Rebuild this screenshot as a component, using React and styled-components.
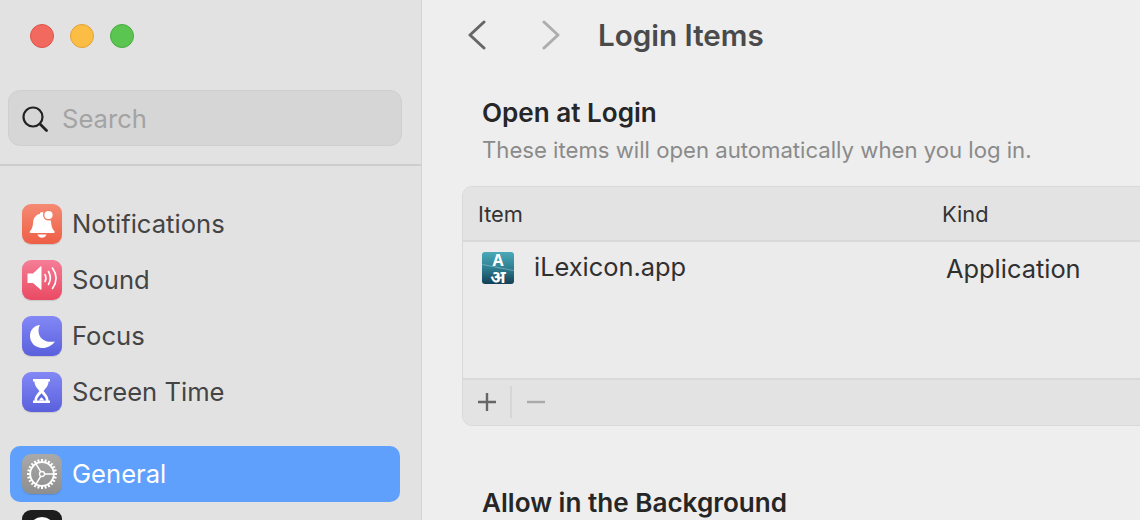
import React from "react";
import styled, { createGlobalStyle } from "styled-components";

const GlobalStyle = createGlobalStyle`
  html, body {
    margin: 0;
    padding: 0;
    height: 100%;
    overflow: hidden;
    font-family: Inter, "Liberation Sans", sans-serif;
    -webkit-font-smoothing: antialiased;
  }
`;

const Window = styled.div`
  display: flex;
  width: 1140px;
  height: 520px;
  overflow: hidden;
  background: #eeeeee;
`;

const Sidebar = styled.aside`
  flex: 0 0 421px;
  height: 520px;
  overflow: hidden;
  box-sizing: content-box;
  background: #e2e2e2;
  border-right: 1px solid #d4d4d4;
`;

const Lights = styled.div`
  display: flex;
  align-items: center;
  gap: 16px;
  height: 72px;
  padding-left: 30px;
`;

const Light = styled.span`
  width: 24px;
  height: 24px;
  box-sizing: border-box;
  border-radius: 50%;
  background: ${(p) => p.$color};
  border: 1px solid ${(p) => p.$edge};
`;

const SearchBox = styled.div`
  display: flex;
  align-items: center;
  gap: 14px;
  box-sizing: border-box;
  height: 56px;
  margin: 18px 19px 0 8px;
  padding: 1px 0 0 13px;
  background: #d6d6d6;
  border: 1px solid #cfcfcf;
  border-radius: 12px;
  color: #a3a3a3;
  font-size: 25.6px;
`;

const Divider = styled.div`
  height: 2px;
  margin-top: 18px;
  background: #cdcdcd;
`;

const Nav = styled.nav`
  padding-top: 30px;
`;

const Group = styled.div`
  margin: 0 21px 26px 10px;
`;

const Row = styled.div`
  display: flex;
  align-items: center;
  gap: 10px;
  height: 56px;
  padding-left: 12px;
  border-radius: 10px;
  font-size: 25.6px;
  color: ${(p) => (p.$active ? "#ffffff" : "#444444")};
  background: ${(p) => (p.$active ? "#5ea0fc" : "transparent")};
`;

const RowLabel = styled.span`
  margin-bottom: 2px;
`;

const IconTile = styled.span`
  flex: 0 0 40px;
  display: flex;
  width: 40px;
  height: 40px;
  border-radius: 9px;
  background: ${(p) => p.$bg};
  box-shadow: 0 1px 1px rgba(0, 0, 0, 0.12);
`;

const Main = styled.main`
  flex: 1;
  min-width: 0;
  height: 520px;
  overflow: hidden;
`;

const TitleBar = styled.header`
  display: flex;
  align-items: center;
  height: 70px;
  padding-left: 45px;
`;

const NavButton = styled.span`
  display: flex;
  width: 24px;
  margin-right: ${(p) => p.$gap}px;
`;

const Title = styled.h1`
  margin: 0;
  font-size: 29.6px;
  font-weight: 600;
  color: #4a4a4a;
`;

const Section = styled.section`
  padding: 27px 0 0 40px;
`;

const Heading = styled.h2`
  margin: 0 0 0 20px;
  font-size: 26.1px;
  line-height: 32px;
  font-weight: 600;
  color: #262626;
`;

const Subtitle = styled.p`
  margin: 7px 0 0 20px;
  font-size: 22.15px;
  line-height: 28px;
  color: #8a8a8a;
`;

const Table = styled.div`
  width: 760px;
  margin-top: 22px;
  box-sizing: border-box;
  border: 1px solid #d9d9d9;
  border-radius: 10px;
  background: #ebebeb;
  overflow: hidden;
`;

const TableHead = styled.div`
  display: grid;
  grid-template-columns: 464px 1fr;
  align-items: center;
  height: 53px;
  padding-left: 15px;
  background: #e3e3e3;
  border-bottom: 2px solid #d9d9d9;
  font-size: 21.8px;
  color: #333333;
`;

const TableBody = styled.div`
  display: grid;
  grid-template-columns: 464px 1fr;
  height: 136px;
  padding-left: 19px;
  font-size: 25.4px;
  color: #303030;
`;

const AppCell = styled.div`
  display: flex;
  align-items: flex-start;
  gap: 20px;
  padding-top: 9px;
  line-height: 32px;
`;

const KindCell = styled.div`
  padding-top: 11px;
  line-height: 32px;
`;

const AppIcon = styled.span`
  position: relative;
  flex: 0 0 32px;
  display: flex;
  flex-direction: column;
  align-items: center;
  width: 32px;
  height: 32px;
  margin-top: 1px;
  border-radius: 3px;
  background: linear-gradient(#4aa9b8 0%, #2f7f92 50%, #123f56 100%);
  color: #ffffff;
  font-weight: 700;

  &::after {
    content: "";
    position: absolute;
    left: 0;
    right: 0;
    top: 15px;
    height: 1px;
    background: rgba(255, 255, 255, 0.3);
    transform: rotate(11deg);
  }
`;

const AppGlyph = styled.span`
  font-size: ${(p) => p.$size}px;
  line-height: 16px;
  font-family: "Noto Sans", "Noto Sans CJK SC", "DejaVu Sans", sans-serif;
`;

const TableFoot = styled.div`
  display: flex;
  align-items: center;
  height: 47px;
  padding-bottom: 2px;
  box-sizing: border-box;
  background: #e3e3e3;
  border-top: 2px solid #d9d9d9;
`;

const FootButton = styled.span`
  display: flex;
  justify-content: center;
  width: 47px;
`;

const FootSeparator = styled.span`
  width: 2px;
  height: 32px;
  background: #d6d6d6;
`;

const SecondHeading = styled(Heading)`
  margin-top: 61px;
`;

const TileSvg = ({ children, stroke }) => (
  <svg width="40" height="40" viewBox="0 0 40 40" fill="none" stroke={stroke}>
    {children}
  </svg>
);

const BellIcon = () => (
  <TileSvg>
    <path
      fill="#fff"
      d="M20 8c-1.200 0-2 .8-2 1.800-4 1-6.500 4-6.800 8-.3 4-.8 7-3.200 9.500-.7.800-.3 1.700.7 1.700h23c1 0 1.400-.9.700-1.700-2.400-2.500-3-5.500-3.300-9.300C28 14 25 10.800 22 9.800 22 8.800 21.200 8 20 8z"
    />
    <path fill="#fff" d="M15.500 30.500h9c-.4 2-2.200 3.200-4.500 3.200s-4.100-1.200-4.500-3.200z" />
    <circle cx="26.500" cy="11" r="4.800" fill="#fff" stroke="#f37f69" strokeWidth="1.400" />
  </TileSvg>
);

const SoundIcon = () => (
  <TileSvg>
    <path fill="#fff" d="M5.500 13.500h5.500L18.500 6.500c.5-.4 1-.2 1 .5v22c0 .7-.5.900-1 .5L11 23H5.500z" />
    <g stroke="#fff" strokeWidth="1.600" strokeLinecap="round">
      <path d="M23 14.500c1.200 2.300 1.200 5 0 7" />
      <path d="M26.500 11.500c2.400 4.400 2.400 9 0 13" />
      <path d="M30.500 8c4.600 6.500 4.600 14 0 20.500" />
    </g>
  </TileSvg>
);

const MoonIcon = () => (
  <TileSvg>
    <path
      fill="#fff"
      d="M17.500 9C11.500 10 8 14.500 8 20c0 7 5.500 12 12.500 12 5 0 9.500-2.500 12.500-6.500-8.500 1.500-16.500-2-16.500-11 0-2.200.5-4 1.500-5.500z"
    />
  </TileSvg>
);

const HourglassIcon = () => (
  <TileSvg>
    <path
      fill="#fff"
      d="M11 7h17v2.500h-1.500c0 4-2.500 6.500-5 9.500 2.500 3 5 5.500 5 9.500H28V31H11v-2.500h1.500c0-4 2.500-6.500 5-9.500-2.500-3-5-5.500-5-9.500H11z"
    />
    <path fill="#6268e0" d="M15 28.500c.3-3 2.500-5 4.500-7.200 2 2.200 4.200 4.200 4.500 7.200z" />
    <path fill="#fff" d="M17 28.500c.5-1.500 1.500-2.500 2.500-3.300 1 .8 2 1.800 2.500 3.300z" />
  </TileSvg>
);

const GearIcon = () => {
  const teeth = Array.from({ length: 24 }, (_, i) => (i * 360) / 24);
  return (
    <TileSvg stroke="#fff">
      {teeth.map((a) => (
        <rect key={a} x="19" y="5" width="2" height="3.500" fill="#fff" stroke="none" transform={`rotate(${a} 20 20)`} />
      ))}
      <circle cx="20" cy="20" r="11.800" strokeWidth="1.800" />
      <circle cx="20" cy="20" r="2.500" strokeWidth="1.300" />
      <path d="M22.500 20H31.500M18.800 17.800 14 9.800M18.800 22.200 14 30.200" strokeWidth="1.500" />
    </TileSvg>
  );
};

const AppearanceIcon = () => (
  <TileSvg>
    <circle cx="20" cy="20" r="13" fill="#fff" />
  </TileSvg>
);

const SearchIcon = () => (
  <svg width="26" height="26" viewBox="0 0 26 26" fill="none" stroke="#222" strokeLinecap="round">
    <circle cx="11" cy="11" r="9.500" strokeWidth="2.200" />
    <path d="M18 18l6.500 6.500" strokeWidth="2.800" />
  </svg>
);

const Chevron = ({ color, flip }) => (
  <svg width="20" height="30" viewBox="0 0 20 30" fill="none" stroke={color} strokeWidth="3" strokeLinecap="round" strokeLinejoin="round">
    <path d={flip ? "M3 2l14 13L3 28" : "M17 2L3 15l14 13"} />
  </svg>
);

const PlusIcon = () => (
  <svg width="20" height="20" viewBox="0 0 20 20" stroke="#666" strokeWidth="2.400">
    <path d="M1 10h18M10 1v18" />
  </svg>
);

const MinusIcon = () => (
  <svg width="20" height="20" viewBox="0 0 20 20" stroke="#aaa" strokeWidth="2.400">
    <path d="M1 10h18" />
  </svg>
);

const topItems = [
  { label: "Notifications", bg: "linear-gradient(#f58a73, #ee5f45)", icon: <BellIcon /> },
  { label: "Sound", bg: "linear-gradient(#f57d96, #ea4a63)", icon: <SoundIcon /> },
  { label: "Focus", bg: "linear-gradient(#8388f5, #5a60dc)", icon: <MoonIcon /> },
  { label: "Screen Time", bg: "linear-gradient(#8388f5, #5a60dc)", icon: <HourglassIcon /> },
];

export default function App() {
  return (
    <Window>
      <GlobalStyle />
      <Sidebar>
        <Lights>
          <Light $color="#f26a5f" $edge="#dc5449" />
          <Light $color="#fbbd44" $edge="#e2a233" />
          <Light $color="#5ac551" $edge="#46ad3e" />
        </Lights>
        <SearchBox>
          <SearchIcon />
          Search
        </SearchBox>
        <Divider />
        <Nav>
          <Group>
            {topItems.map((item) => (
              <Row key={item.label}>
                <IconTile $bg={item.bg}>{item.icon}</IconTile>
                <RowLabel>{item.label}</RowLabel>
              </Row>
            ))}
          </Group>
          <Group>
            <Row $active>
              <IconTile $bg="linear-gradient(#a9a9a9, #8e8e8e)">
                <GearIcon />
              </IconTile>
              <RowLabel>General</RowLabel>
            </Row>
            <Row>
              <IconTile $bg="#1d1d1d">
                <AppearanceIcon />
              </IconTile>
            </Row>
          </Group>
        </Nav>
      </Sidebar>
      <Main>
        <TitleBar>
          <NavButton $gap={50}>
            <Chevron color="#666666" />
          </NavButton>
          <NavButton $gap={33}>
            <Chevron color="#adadad" flip />
          </NavButton>
          <Title>Login Items</Title>
        </TitleBar>
        <Section>
          <Heading>Open at Login</Heading>
          <Subtitle>These items will open automatically when you log in.</Subtitle>
          <Table>
            <TableHead>
              <span>Item</span>
              <span>Kind</span>
            </TableHead>
            <TableBody>
              <AppCell>
                <AppIcon>
                  <AppGlyph $size={16}>A</AppGlyph>
                  <AppGlyph $size={18}>अ</AppGlyph>
                </AppIcon>
                iLexicon.app
              </AppCell>
              <KindCell>Application</KindCell>
            </TableBody>
            <TableFoot>
              <FootButton>
                <PlusIcon />
              </FootButton>
              <FootSeparator />
              <FootButton>
                <MinusIcon />
              </FootButton>
            </TableFoot>
          </Table>
          <SecondHeading>Allow in the Background</SecondHeading>
        </Section>
      </Main>
    </Window>
  );
}
